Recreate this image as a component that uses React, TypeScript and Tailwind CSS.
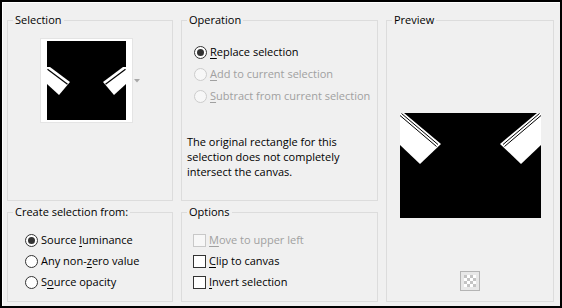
import React from "react";

function Radio({ checked, disabled }: { checked?: boolean; disabled?: boolean }) {
  return (
    <span
      className={
        disabled
          ? "w-[13px] h-[13px] rounded-full border border-[#cccccc] bg-[#f7f7f7] flex items-center justify-center shrink-0"
          : "w-[13px] h-[13px] rounded-full border border-[#333333] bg-white flex items-center justify-center shrink-0"
      }
    >
      {checked && <span className="w-[7px] h-[7px] rounded-full bg-[#333333]" />}
    </span>
  );
}

function Check({ disabled }: { disabled?: boolean }) {
  return (
    <span
      className={
        disabled
          ? "w-[13px] h-[13px] border border-[#c8c8c8] bg-[#f7f7f7] shrink-0"
          : "w-[13px] h-[13px] border border-[#333333] bg-white shrink-0"
      }
    />
  );
}

function U({ children }: { children: React.ReactNode }) {
  return <span className="underline underline-offset-[2px]">{children}</span>;
}

function Legend({ children }: { children: React.ReactNode }) {
  return <legend className="ml-[5px] px-[2px] leading-[16px] text-black">{children}</legend>;
}

export default function App() {
  return (
    <div className="w-[562px] h-[308px] border-2 border-black bg-[#f0f0f0] font-['Open_Sans',sans-serif] text-[11px] text-black overflow-hidden">
      <div className="w-full h-full border-t border-l border-white">
        <div className="grid grid-cols-[166px_197px_168px] grid-rows-[189px_98px] gap-x-2 gap-y-[3px] pl-[4px] pt-[9px]">
          {/* Selection */}
          <fieldset className="border border-[#dcdcdc] min-w-0">
            <Legend>Selection</Legend>
            <div className="flex items-start mt-[11px] ml-[33px]">
              <div className="w-[91px] h-[83px] bg-white outline outline-1 outline-[#e4e4e4] flex items-center justify-center">
                <svg width="79" height="79" viewBox="0 0 79 79" className="block">
                  <rect x="0" y="0" width="79" height="79" fill="#000" />
                  <polygon points="0,26 3,26 23,41 12,54 0,43" fill="#fff" />
                  <line x1="0.5" y1="28.2" x2="20.5" y2="43.2" stroke="#000" strokeWidth="1.2" />
                  <polygon points="79,26 76,26 56,41 67,54 79,43" fill="#fff" />
                  <line x1="78.5" y1="28.2" x2="58.5" y2="43.2" stroke="#000" strokeWidth="1.2" />
                </svg>
              </div>
              <svg width="6" height="4" viewBox="0 0 6 4" className="ml-[2px] mt-[40px]">
                <polygon points="0,0 6,0 3,3.5" fill="#a8a8a8" />
              </svg>
            </div>
          </fieldset>

          {/* Operation */}
          <fieldset className="border border-[#dcdcdc] min-w-0">
            <Legend>Operation</Legend>
            <div className="mt-[13px] pl-[12px] flex flex-col">
              <div className="h-[22px] flex items-center">
                <Radio checked />
                <span className="ml-[3px]"><U>R</U>eplace selection</span>
              </div>
              <div className="h-[22px] flex items-center text-[#a0a0a0]">
                <Radio disabled />
                <span className="ml-[3px]"><U>A</U>dd to current selection</span>
              </div>
              <div className="h-[22px] flex items-center text-[#a0a0a0]">
                <Radio disabled />
                <span className="ml-[3px]"><U>S</U>ubtract from current selection</span>
              </div>
            </div>
            <p className="mt-[27px] pl-[5px] leading-[15px]">
              The original rectangle for this
              <br />
              selection does not completely
              <br />
              intersect the canvas.
            </p>
          </fieldset>

          {/* Preview */}
          <fieldset className="row-span-2 border border-[#dcdcdc] min-w-0">
            <Legend>Preview</Legend>
            <div className="flex flex-col items-center">
              <svg width="141" height="105" viewBox="0 0 141 105" className="block mt-[85px]">
                <rect x="0" y="0" width="141" height="105" fill="#000" />
                <polygon points="0,0 4,0 41,31 20,51 0,32" fill="#fff" />
                <line x1="1.5" y1="0.5" x2="38" y2="31.5" stroke="#000" strokeWidth="1" />
                <line x1="0" y1="2.5" x2="36.5" y2="33.5" stroke="#000" strokeWidth="1" />
                <polygon points="141,0 137,0 100,31 121,51 141,32" fill="#fff" />
                <line x1="139.5" y1="0.5" x2="103" y2="31.5" stroke="#000" strokeWidth="1" />
                <line x1="141" y1="2.5" x2="104.5" y2="33.5" stroke="#000" strokeWidth="1" />
              </svg>
              <div className="mt-[53px] w-[20px] h-[20px] border border-[#b4b4b4] bg-[#e8e8e8] flex items-center justify-center">
                <svg width="12" height="12" viewBox="0 0 12 12" className="block">
                  <rect x="0" y="0" width="12" height="12" fill="#ffffff" />
                  <rect x="0" y="0" width="3" height="3" fill="#c4c4c4" />
                  <rect x="6" y="0" width="3" height="3" fill="#c4c4c4" />
                  <rect x="3" y="3" width="3" height="3" fill="#c4c4c4" />
                  <rect x="9" y="3" width="3" height="3" fill="#c4c4c4" />
                  <rect x="0" y="6" width="3" height="3" fill="#c4c4c4" />
                  <rect x="6" y="6" width="3" height="3" fill="#c4c4c4" />
                  <rect x="3" y="9" width="3" height="3" fill="#c4c4c4" />
                  <rect x="9" y="9" width="3" height="3" fill="#c4c4c4" />
                </svg>
              </div>
            </div>
          </fieldset>

          {/* Create selection from */}
          <fieldset className="border border-[#dcdcdc] min-w-0">
            <Legend>Create selection from:</Legend>
            <div className="mt-[10px] pl-[17px] flex flex-col">
              <div className="h-[21px] flex items-center">
                <Radio checked />
                <span className="ml-[3px]">Source <U>l</U>uminance</span>
              </div>
              <div className="h-[21px] flex items-center">
                <Radio />
                <span className="ml-[3px]">Any non-<U>z</U>ero value</span>
              </div>
              <div className="h-[21px] flex items-center">
                <Radio />
                <span className="ml-[3px]">S<U>o</U>urce opacity</span>
              </div>
            </div>
          </fieldset>

          {/* Options */}
          <fieldset className="border border-[#dcdcdc] min-w-0">
            <Legend>Options</Legend>
            <div className="mt-[10px] pl-[11px] flex flex-col">
              <div className="h-[21px] flex items-center text-[#a0a0a0]">
                <Check disabled />
                <span className="ml-[3px]"><U>M</U>ove to upper left</span>
              </div>
              <div className="h-[21px] flex items-center">
                <Check />
                <span className="ml-[3px]"><U>C</U>lip to canvas</span>
              </div>
              <div className="h-[21px] flex items-center">
                <Check />
                <span className="ml-[3px]"><U>I</U>nvert selection</span>
              </div>
            </div>
          </fieldset>
        </div>
      </div>
    </div>
  );
}
